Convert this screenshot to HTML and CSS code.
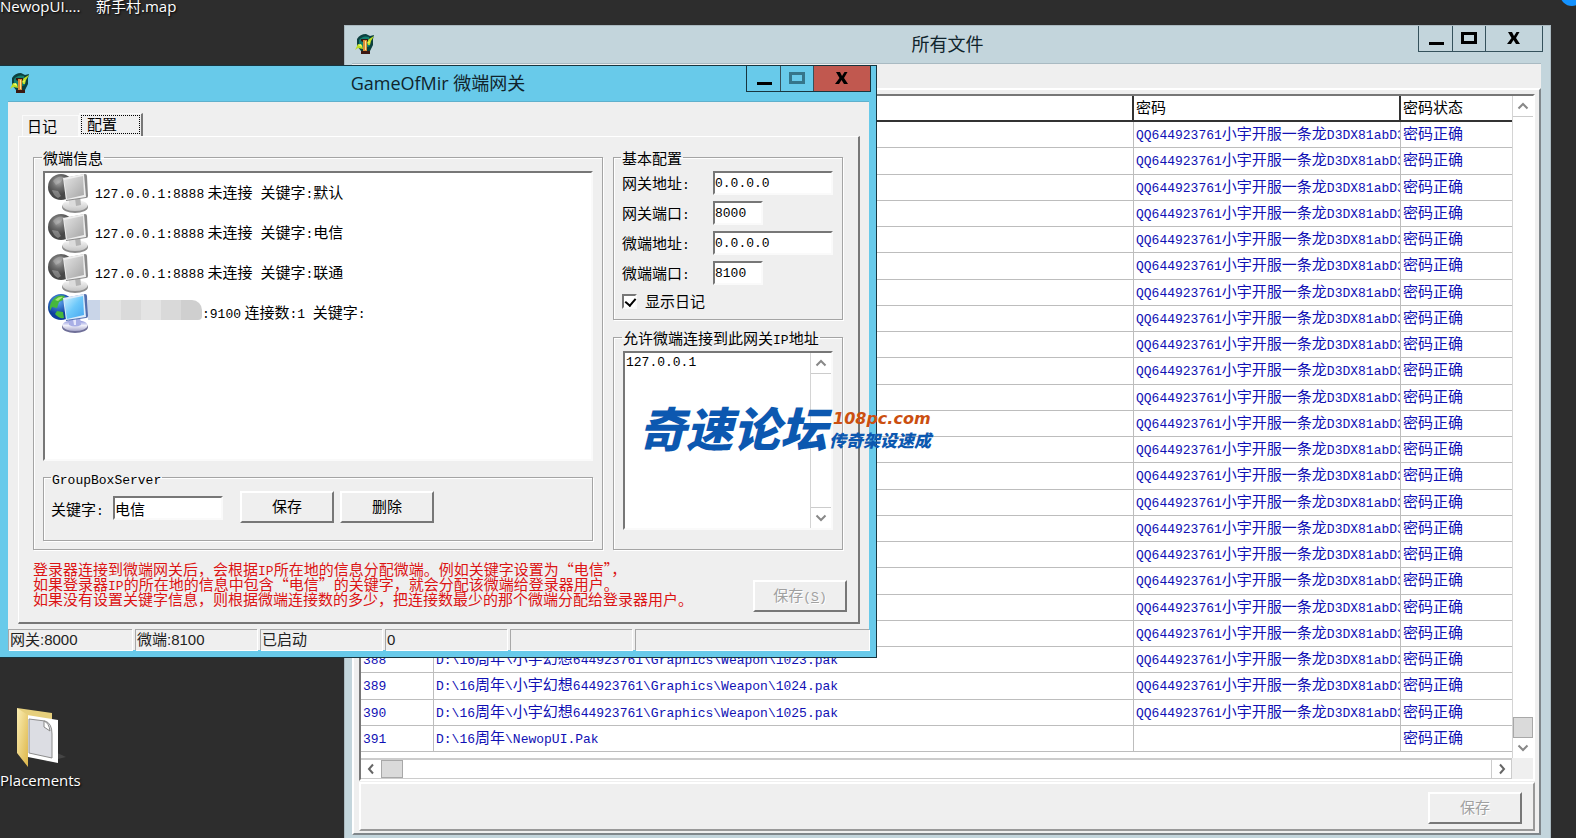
FILE: index.html
```html
<!DOCTYPE html>
<html lang="zh-CN">
<head>
<meta charset="utf-8">
<title>GameOfMir 微端网关</title>
<link rel="stylesheet" href="styles.css">
</head>
<body>
<svg class="defs" width="0" height="0" aria-hidden="true">
  <defs>
    <linearGradient id="greyScreen" x1="0" y1="0" x2="1" y2="1"><stop offset="0" stop-color="#e4e4e4"/><stop offset="1" stop-color="#a5a5a5"/></linearGradient>
    <radialGradient id="greyGlobe" cx=".4" cy=".3"><stop offset="0" stop-color="#a8a8a8"/><stop offset=".5" stop-color="#6c6c6c"/><stop offset="1" stop-color="#484848"/></radialGradient>
    <linearGradient id="greyFoot" x1="0" y1="0" x2="0" y2="1"><stop offset="0" stop-color="#f8f8f8"/><stop offset="1" stop-color="#c4c4c4"/></linearGradient>
    <linearGradient id="blueScreen" x1="0" y1="0" x2="1" y2="1"><stop offset="0" stop-color="#d2f1ff"/><stop offset=".5" stop-color="#6cc8fa"/><stop offset="1" stop-color="#45a5ee"/></linearGradient>
    <radialGradient id="blueGlobe" cx=".4" cy=".3"><stop offset="0" stop-color="#5ea8f0"/><stop offset="1" stop-color="#0d3e9e"/></radialGradient>
    <linearGradient id="blueFoot" x1="0" y1="0" x2="0" y2="1"><stop offset="0" stop-color="#7f88d8"/><stop offset=".5" stop-color="#f0f0fa"/><stop offset="1" stop-color="#a9a9cc"/></linearGradient>
    <linearGradient id="folder" x1="0" y1="0" x2="1" y2="1"><stop offset="0" stop-color="#fbeeb4"/><stop offset="1" stop-color="#dcb548"/></linearGradient>
    <symbol id="pcGrey" viewBox="0 0 40 40">
      <circle cx="13" cy="14" r="13" fill="url(#greyGlobe)"/>
      <path d="M5 8Q10 2 16 4L13 9 8 12ZM4 17l6 1 3 5-3 2Q5 22 4 17Z" fill="#bcbcbc" opacity=".45"/>
      <ellipse cx="27" cy="34" rx="13" ry="6" fill="#8e8e8e"/><ellipse cx="27" cy="32.500" rx="12.500" ry="5.500" fill="url(#greyFoot)"/>
      <path d="M21 25l11-1 1 8q-6 3-12 0Z" fill="#dcdcdc"/><path d="M27 25l5-1 1 8-5 1Z" fill="#b4b4b4"/>
      <path d="M16 5L37 1q2 0 2 2l1 20q0 2-2 2L18 28Z" fill="#8a8a8a"/><path d="M15 5L36 1l2 23-20 3Z" fill="#eee"/><path d="M16 7l19-4 1 19-17 4Z" fill="url(#greyScreen)"/>
    </symbol>
    <symbol id="pcBlue" viewBox="0 0 40 40">
      <circle cx="13" cy="14" r="13" fill="url(#blueGlobe)"/>
      <path d="M4 8Q9 1 17 3L15 7 11 9 9 15 4 14 2 18Q1 12 4 8ZM9 18l6 1 1 6q-5 1-9-4Z" fill="#46b83c"/><path d="M7 7q4-4 8-3l-5 4Z" fill="#a8e672"/>
      <ellipse cx="27" cy="34" rx="13" ry="6" fill="#6f6f98"/><ellipse cx="27" cy="32.500" rx="12.500" ry="5.500" fill="url(#blueFoot)"/>
      <path d="M21 25l11-1 1 8q-6 3-12 0Z" fill="#a9afe6"/><path d="M25 26l3-1 0 7-2 0Z" fill="#e6e8fb"/>
      <path d="M16 5L37 1q2 0 2 2l1 20q0 2-2 2L18 28Z" fill="#536fae"/><path d="M15 5L36 1l2 23-20 3Z" fill="#dcecfb"/><path d="M16 7l19-4 1 19-17 4Z" fill="url(#blueScreen)"/>
    </symbol>
    <symbol id="mir" viewBox="0 0 20 20">
      <path d="M2 5Q5 0 11 0l4 2 4-1-1 4 0 6-3 6-9 0-4-5Z" fill="#0b403f"/><path d="M4 6q4-5 10-3l1 9-7 3-4-4Z" fill="#127e70"/>
      <path d="M0 16l3-6 4 1 1 4-5-1ZM12 8l2-3 5-3-3 5-1 4-2 0Z" fill="#bddd25"/><path d="M3 11l3-1 1 3ZM13 8l2-1-1 3Z" fill="#f5ff66"/>
      <path d="M6 5h7v2l-1 1v9h3v3H6v-3h2V8L6 7Z" fill="#3b1812"/><path d="M8 6h4v11H8Z" fill="#d98c36"/><path d="M10 7h1v9h-1Z" fill="#ffe18b"/>
    </symbol>
    <symbol id="up" viewBox="0 0 12 12"><path d="M1.500 8.500L6 4l4.500 4.500" fill="none" stroke="#888" stroke-width="2"/></symbol>
    <symbol id="down" viewBox="0 0 12 12"><path d="M1.500 3.500L6 8l4.500-4.500" fill="none" stroke="#888" stroke-width="2"/></symbol>
    <symbol id="left" viewBox="0 0 12 12"><path d="M8 1.500L4 6l4 4.500" fill="none" stroke="#666" stroke-width="2"/></symbol>
    <symbol id="right" viewBox="0 0 12 12"><path d="M4 1.500L8 6l-4 4.500" fill="none" stroke="#666" stroke-width="2"/></symbol>
    <symbol id="min" viewBox="0 0 16 14"><path d="M1 10h15v3H1Z" fill="#000"/></symbol>
    <symbol id="max" viewBox="0 0 16 14"><path d="M1.500 1.500h13v9h-13Z" fill="none" stroke="currentColor" stroke-width="3"/></symbol>
    <symbol id="close" viewBox="0 0 14 14"><path d="M1 0h4l2 4L9.500 0h3L9 6l4 6H9L6.500 8 4 12H0l4.500-6Z" fill="#000"/></symbol>
  </defs>
</svg>

<main class="desktop">
  <div class="labels"><span class="name">NewopUI....</span><span>新手村.map</span></div>
  <span class="bubble"></span>
  <div class="shortcut">
    <svg width="54" height="62" viewBox="0 0 54 62" aria-hidden="true">
      <path d="M30 55l20-5-13-6Z" fill="#555" opacity=".6"/>
      <path d="M1 1l35 5v40L12 50Z" fill="#e6cf7c"/><path d="M11 8l31 5v43l-30-6Z" fill="#fff"/>
      <path d="M13 12l16 2q7 2 7 13v24l-23-5Z" fill="#dcdde3" stroke="#8c8c8c"/><path d="M28 14l0 6 6 4q-1-8-6-10Z" fill="#fff" stroke="#888"/>
      <path d="M1 1l11 7v52L1 46Z" fill="url(#folder)"/>
    </svg>
    <span>Placements</span>
  </div>

  <section class="window files" aria-label="所有文件">
    <header class="titlebar">
      <svg class="app" aria-hidden="true"><use href="#mir"/></svg>
      <h1>所有文件</h1>
      <div class="controls">
        <button class="c-min" aria-label="最小化"><svg width="16" height="14"><use href="#min"/></svg></button>
        <button class="c-max" aria-label="最大化"><svg width="16" height="14"><use href="#max"/></svg></button>
        <button class="c-close" aria-label="关闭"><svg width="14" height="14"><use href="#close"/></svg></button>
      </div>
    </header>
    <div class="files-client">
      <div class="files-page">
        <div class="grid-box">
          <div class="grid-view">
            <table>
              <colgroup><col class="col-no"><col><col class="col-pass"><col class="col-state"></colgroup>
              <thead><tr><th>序号</th><th>文件</th><th>密码</th><th>密码状态</th></tr></thead>
              <tbody id="rows"></tbody>
            </table>
          </div>
          <div class="vbar">
            <button aria-label="向上"><svg width="12" height="12"><use href="#up"/></svg></button>
            <i class="track"></i><i class="thumb"></i>
            <button aria-label="向下"><svg width="12" height="12"><use href="#down"/></svg></button>
          </div>
          <div class="hbar">
            <button aria-label="向左"><svg width="12" height="12"><use href="#left"/></svg></button>
            <i class="thumb"></i><i class="track"></i>
            <button aria-label="向右"><svg width="12" height="12"><use href="#right"/></svg></button>
          </div>
          <i class="corner"></i>
        </div>
        <div class="files-foot"><button class="btn" disabled>保存</button></div>
      </div>
    </div>
  </section>

  <section class="window gateway" aria-label="GameOfMir 微端网关">
    <header class="titlebar">
      <svg class="app" aria-hidden="true"><use href="#mir"/></svg>
      <h1>GameOfMir 微端网关</h1>
      <div class="controls">
        <button class="c-min" aria-label="最小化"><svg width="16" height="14"><use href="#min"/></svg></button>
        <button class="c-max" aria-label="最大化"><svg width="16" height="14"><use href="#max"/></svg></button>
        <button class="c-close" aria-label="关闭"><svg width="14" height="14"><use href="#close"/></svg></button>
      </div>
    </header>
    <div class="client">
      <div class="tabs" role="tablist">
        <button class="tab" role="tab">日记</button>
        <button class="tab on" role="tab" aria-selected="true"><span>配置</span></button>
      </div>
      <div class="page">
        <div class="columns">
          <fieldset class="servers">
            <legend>微端信息</legend>
            <ul class="list">
              <li><svg width="40" height="40"><use href="#pcGrey"/></svg><span><b>127.0.0.1:8888</b> 未连接<b> </b>关键字<b>:</b>默认</span></li>
              <li><svg width="40" height="40"><use href="#pcGrey"/></svg><span><b>127.0.0.1:8888</b> 未连接<b> </b>关键字<b>:</b>电信</span></li>
              <li><svg width="40" height="40"><use href="#pcGrey"/></svg><span><b>127.0.0.1:8888</b> 未连接<b> </b>关键字<b>:</b>联通</span></li>
              <li><svg width="40" height="40"><use href="#pcBlue"/></svg><i class="mask"></i><span><b>:9100</b> 连接数<b>:1 </b>关键字<b>:</b></span></li>
            </ul>
            <fieldset class="group-server">
              <legend><b>GroupBoxServer</b></legend>
              <div class="key-row">
                <label for="key">关键字<b>:</b></label>
                <input id="key" class="field cjk" type="text" value="电信">
                <button class="btn">保存</button>
                <button class="btn">删除</button>
              </div>
            </fieldset>
          </fieldset>
          <div class="side">
            <fieldset class="basic">
              <legend>基本配置</legend>
              <div class="form">
                <label for="ga">网关地址<b>:</b></label><input id="ga" class="field" type="text" value="0.0.0.0">
                <label for="gp">网关端口<b>:</b></label><input id="gp" class="field short" type="text" value="8000">
                <label for="ma">微端地址<b>:</b></label><input id="ma" class="field" type="text" value="0.0.0.0">
                <label for="mp">微端端口<b>:</b></label><input id="mp" class="field short" type="text" value="8100">
              </div>
              <label class="check"><input type="checkbox" checked>显示日记</label>
            </fieldset>
            <fieldset class="allow">
              <legend>允许微端连接到此网关<b>IP</b>地址</legend>
              <div class="memo">
                <textarea aria-label="允许微端连接到此网关IP地址">127.0.0.1</textarea>
                <div class="vbar">
                  <button aria-label="向上"><svg width="12" height="12"><use href="#up"/></svg></button>
                  <i class="track"></i>
                  <button aria-label="向下"><svg width="12" height="12"><use href="#down"/></svg></button>
                </div>
              </div>
            </fieldset>
          </div>
        </div>
        <div class="bottom">
          <p>登录器连接到微端网关后，会根据<b>IP</b>所在地的信息分配微端。例如关键字设置为“电信”，<br>如果登录器<b>IP</b>的所在地的信息中包含“电信”的关键字，就会分配该微端给登录器用户。<br>如果没有设置关键字信息，则根据微端连接数的多少，把连接数最少的那个微端分配给登录器用户。</p>
          <button class="btn" disabled>保存<b>(<u>S</u>)</b></button>
        </div>
      </div>
      <footer class="status"><span class="first">网关:8000</span><span>微端:8100</span><span>已启动</span><span>0</span><span></span><span class="rest"></span></footer>
    </div>
  </section>

  <div class="watermark">
    <strong>奇速论坛</strong>
    <div><em>108pc.com</em><span>传奇架设速成</span></div>
  </div>
</main>
<script src="app.js"></script>
</body>
</html>
```

FILE: styles.css
```css
* { box-sizing: border-box; }
body {
  margin: 0;
  font: 15px/18px "Noto Sans CJK SC", sans-serif;
  color: #000;
}
button, input, textarea { font: inherit; color: inherit; margin: 0; padding: 0; border-radius: 0; }
b { font-family: "Liberation Mono", monospace; font-size: 13px; line-height: 0; font-weight: 400; white-space: pre; }
svg { flex: none; display: block; }
.defs { position: absolute; }

.desktop { position: relative; height: 100vh; overflow: hidden; background: #2d2d2d; }
.labels, .shortcut {
  font: 15px/20px "Open Sans", "Noto Sans CJK SC", sans-serif;
  color: #fff;
  text-shadow: 1px 1px 2px #000;
}
.labels { display: flex; position: absolute; top: -4px; left: 0; }
.labels .name { width: 96px; }
.shortcut { position: absolute; left: 0; top: 707px; }
.shortcut svg { margin: 0 0 1px 16px; }
.bubble { position: absolute; top: -18px; right: -8px; width: 24px; height: 24px; border-radius: 50%; background: #1492ff; }

/* Window frames */
.window { position: absolute; display: flex; flex-direction: column; }
.titlebar { position: relative; flex: none; display: flex; align-items: center; justify-content: center; padding-bottom: 2px; }
.titlebar h1 { margin: 0; font: 400 18px/24px "Open Sans", "Noto Sans CJK SC", sans-serif; color: #10242c; }
.app { position: absolute; left: 10px; top: 8px; width: 20px; height: 20px; }
.controls { position: absolute; top: 0; right: 7px; display: flex; border: 1px solid #35515c; border-top: 0; }
.controls button { display: flex; align-items: center; justify-content: center; height: 25px; background: none; border: 0; }
.controls button + button { border-left: 1px solid #35515c; }
.c-min { width: 33px; }
.c-max { width: 33px; }
.c-close { width: 57px; }

.files { left: 344px; right: 25px; top: 25px; bottom: 0; background: #c3d5dc; border: 1px solid #aab9c0; border-bottom: 0; }
.files .titlebar { height: 37px; }
.files-client { flex: 1; margin: 0 9px 3px 7px; padding-top: 24px; background: #efefef; border-top: 1px solid #a9bac2; display: flex; }
.files-page { flex: 1; min-width: 0; display: flex; flex-direction: column; padding: 4px 4px 2px 5px; border: 2px solid #fff; border-right-color: #80878b; border-bottom-color: #80878b; }
.grid-box {
  flex: 1; min-height: 0; display: grid; grid-template-columns: minmax(0, 1fr) 21px; grid-template-rows: minmax(0, 1fr) 21px;
  border: 2px solid #777; border-right-color: #fff; border-bottom-color: #fff; background: #fff;
}
.grid-view { overflow: hidden; padding-bottom: 6px; }
table { width: 100%; height: 100%; table-layout: fixed; border-collapse: separate; border-spacing: 0; }
.col-no { width: 73px; }
.col-pass { width: 267px; }
.col-state { width: 111px; }
th, td { padding: 0 2px 3px; text-align: left; font-weight: 400; line-height: 20px; white-space: nowrap; overflow: hidden; }
th { height: 26px; border-bottom: 2px solid #333; border-right: 2px solid #333; }
td { color: #1010b4; border-bottom: 1px solid #bdbdbd; border-right: 1px solid #bdbdbd; }
th:last-child, td:last-child { border-right: 0; }

.vbar, .hbar { display: flex; background: #fff; }
.vbar { flex-direction: column; width: 21px; border-left: 1px solid #d4d4d4; }
.hbar { border: 1px solid #ccc; border-left: 0; border-top-width: 2px; }
.vbar button, .hbar button { flex: none; display: flex; align-items: center; justify-content: center; width: 20px; height: 20px; background: #fff; border: 0; }
.hbar button { height: 18px; }
.vbar button:first-child { border-bottom: 1px solid #ccc; height: 21px; }
.vbar .track + button { border-top: 1px solid #ccc; height: 21px; }
.hbar button:last-child { border-left: 1px solid #ccc; }
.track { flex: 1; }
.thumb { flex: none; background: #dadada; border: 1px solid #a8a8a8; }
.vbar .thumb { height: 21px; }
.hbar .thumb { width: 22px; }
.corner { background: #efefef; }
.files-foot { flex: none; height: 49px; margin-top: 1px; padding: 8px 11px 0 0; text-align: right; border: 2px solid #fff; border-right-color: #999; border-bottom-color: #999; }

.gateway { left: 0; top: 65px; width: 877px; background: #68caea; border: 1px solid #17353f; border-left: 0; padding: 0 7px 7px 8px; }
.gateway .titlebar { height: 35px; margin: 0 -7px 0 -8px; }
.gateway .app { top: 7px; }
.gateway .controls { border-color: #17353f; right: 5px; }
.gateway .c-max { color: #35758a; }
.gateway .c-close { background: #c1584f; }
.client { display: flex; flex-direction: column; background: #efefef; padding-top: 11px; border-top: 1px solid #5fb0cc; }

/* Bevels */
.btn {
  width: 94px; height: 32px; padding-bottom: 2px; background: #efefef;
  border: 2px solid #fff; border-right-color: #777; border-bottom-color: #777;
}
.btn:disabled { color: #a0a0a0; text-shadow: 1px 1px 0 #fff; }
.field {
  width: 120px; height: 24px; background: #fff;
  font-family: "Liberation Mono", monospace; font-size: 13px;
  border: 2px solid #777; border-right-color: #fafafa; border-bottom-color: #fafafa;
}
.field.short { width: 50px; }
.field.cjk { width: 110px; font: 15px/18px "Noto Sans CJK SC", sans-serif; }
fieldset { min-width: 0; margin: 0; padding: 0; border: 1px solid #a4a4a4; box-shadow: 1px 1px 0 #fff, inset 1px 1px 0 #fff; }
legend { margin-left: -1px; padding: 0 1px; height: 16px; line-height: 17px; }

/* Gateway contents */
.tabs { display: flex; align-items: flex-end; height: 23px; padding-left: 14px; }
.tab { height: 21px; width: 57px; background: #efefef; border: 1px solid #fafafa; border-bottom: 0; text-align: left; padding-left: 4px; }
.tab.on { width: 64px; height: 24px; padding: 1px 1px 3px 1px; border-right: 2px solid #777; margin-bottom: -1px; }
.tab.on span { display: block; border: 1px dotted #000; line-height: 15px; height: 19px; padding-left: 5px; }
.page {
  margin: 0 9px 0 10px; padding: 12px 15px 10px 14px;
  border: 1px solid #fff; border-right: 2px solid #777; border-bottom: 2px solid #777;
}
.columns { display: grid; grid-template-columns: minmax(0, 1fr) 230px; gap: 10px; }
.servers { padding: 6px 9px 8px; }
.list {
  list-style: none; margin: 0 0 8px; padding: 0 0 0 3px; height: 290px; background: #fff;
  border: 2px solid #777; border-right-color: #fafafa; border-bottom-color: #fafafa;
}
.list li { display: flex; align-items: center; height: 40px; }
.list li span { margin-left: 7px; white-space: nowrap; padding-bottom: 2px; }
.list .mask { width: 114px; height: 20px; margin-top: -6px; border-radius: 0 10px 4px 0; background: linear-gradient(90deg, #c9d5e8 0 12px, #e4e4e4 12px 33px, #dadada 33px 53px, #e4e4e4 53px 73px, #d9d9d9 73px 93px, #cfcfcf 93px); }
.list .mask + span { margin-left: 0; }
.group-server { padding: 6px 7px 17px; }
.group-server legend { margin-left: 0; }
.key-row { display: flex; align-items: center; }
.key-row label { width: 62px; padding-top: 3px; }
.key-row .field { margin: 2px 17px 0 0; }
.key-row .btn + .btn { margin-left: 6px; }

.side { display: grid; grid-template-rows: auto 1fr; gap: 9px; }
.basic { padding: 6px 8px 8px; }
.form { display: grid; grid-template-columns: 91px 1fr; row-gap: 6px; align-items: center; }
.check { display: flex; align-items: center; gap: 8px; height: 20px; margin-top: 6px; }
.check input {
  appearance: none; width: 15px; height: 15px; background: #fff;
  border: 2px solid #777; border-right-color: #fafafa; border-bottom-color: #fafafa; position: relative;
}
.check input:checked::after { content: ""; position: absolute; left: 3px; top: 0; width: 5px; height: 8px; border: solid #000; border-width: 0 2px 2px 0; transform: rotate(40deg); }
.allow { padding: 6px 9px; }
.memo { display: flex; height: 179px; background: #fff; border: 2px solid #777; border-right-color: #fafafa; border-bottom-color: #fafafa; }
.memo textarea { flex: 1; min-width: 0; resize: none; border: 0; background: none; overflow: hidden; padding: 1px; font: 13px/18px "Liberation Mono", monospace; }

.bottom { display: flex; justify-content: space-between; margin: 11px -4px 0 0; }
.bottom p { margin: 0; line-height: 15px; color: #dc1414; white-space: nowrap; }
.bottom .btn { flex: none; margin-top: 19px; }

.status { display: flex; gap: 3px; height: 21px; margin-top: 5px; font: 15px/20px "Liberation Sans", "Noto Sans CJK SC", sans-serif; color: #222; }
.status span { width: 122px; padding-left: 1px; border: solid #a8a8a8; border-width: 1px 0 0 1px; box-shadow: 1px 1px 0 #fff; }
.status .first { width: 124px; }
.status .rest { flex: 1; }

.watermark { position: absolute; left: 639px; top: 399px; display: flex; align-items: center; font-style: italic; font-weight: 900; color: #0c58b0; white-space: nowrap; }
.watermark strong { font-size: 47px; line-height: 56px; font-weight: 900; }
.watermark div { display: flex; flex-direction: column; padding: 6px 0 0 2px; }
.watermark em { font: italic 700 16px/20px "DejaVu Sans", sans-serif; color: #cb4f10; padding-left: 4px; }
.watermark span { font-size: 17px; line-height: 22px; }
```

FILE: app.js
```js
const latin = (text) => text.replace(/[\x21-\x7e]+/g, (run) => `<b>${run}</b>`);

const rows = [];
for (let n = 368; n <= 391; n++) {
  const last = n === 391;
  rows.push([
    String(n),
    last ? "D:\\16周年\\NewopUI.Pak" : `D:\\16周年\\小宇幻想644923761\\Graphics\\Weapon\\${n + 635}.pak`,
    last ? "" : "QQ644923761小宇开服一条龙D3DX81abD3DX",
    "密码正确",
  ]);
}

document.getElementById("rows").innerHTML = rows
  .map((cells) => `<tr>${cells.map((cell) => `<td>${latin(cell)}</td>`).join("")}</tr>`)
  .join("");
```
